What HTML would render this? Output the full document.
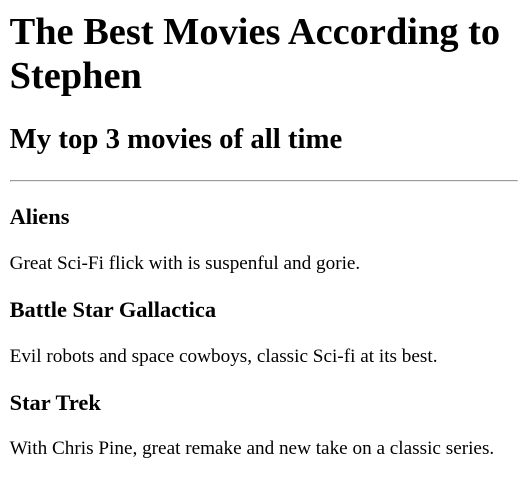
<!DOCTYPE html>
<html><head><meta charset="utf-8"><style>
html{zoom:1.2}
body{margin:8px;font-family:"Liberation Serif",serif;font-size:16px;background:#fff;color:#000}
h1{font-size:32px;margin:8px 0 21px}
h2{font-size:24px;margin:20px 0}
h3{font-size:18.7px;margin:18.7px 0}
p{margin:16px 0}
hr{margin:8px 0 9px}
</style></head><body>
<h1>The Best Movies According to Stephen</h1>
<h2>My top 3 movies of all time</h2>
<hr>
<h3>Aliens</h3>
<p>Great Sci-Fi flick with is suspenful and gorie.</p>
<h3>Battle Star Gallactica</h3>
<p>Evil robots and space cowboys, classic Sci-fi at its best.</p>
<h3>Star Trek</h3>
<p>With Chris Pine, great remake and new take on a classic series.</p>
</body></html>
